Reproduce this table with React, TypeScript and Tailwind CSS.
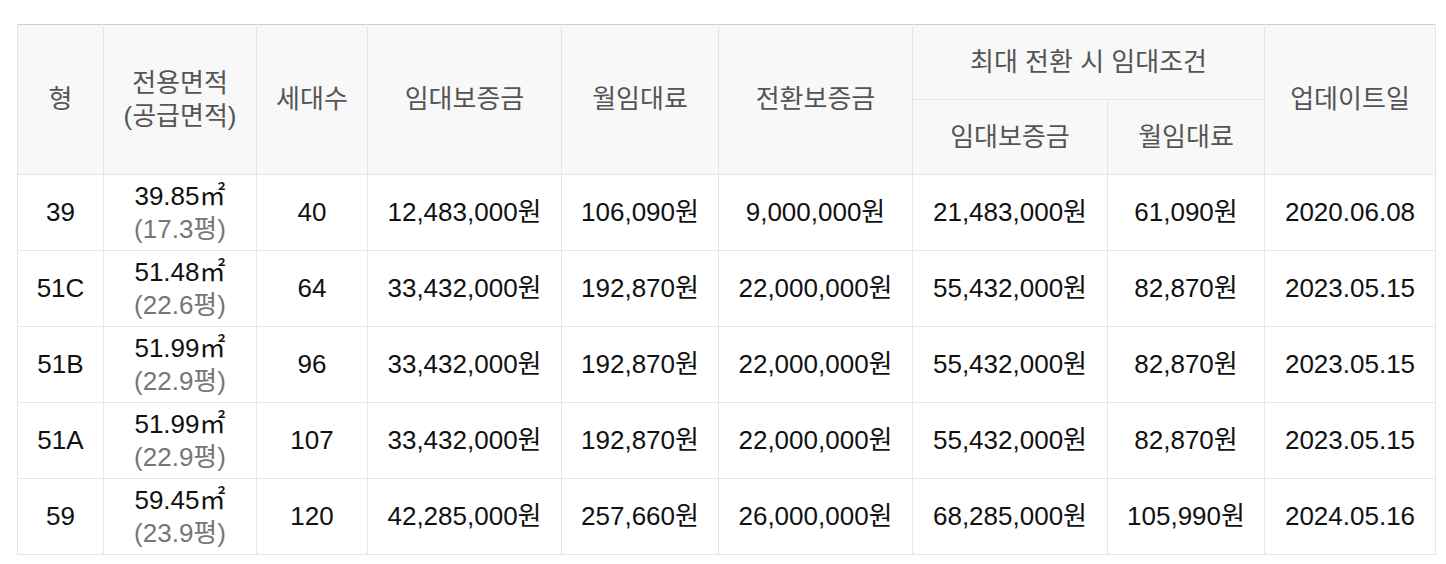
import React from "react";

const rows = [
  { t: "39", a: "39.85㎡", p: "(17.3평)", n: "40", d: "12,483,000원", m: "106,090원", c: "9,000,000원", md: "21,483,000원", mm: "61,090원", u: "2020.06.08" },
  { t: "51C", a: "51.48㎡", p: "(22.6평)", n: "64", d: "33,432,000원", m: "192,870원", c: "22,000,000원", md: "55,432,000원", mm: "82,870원", u: "2023.05.15" },
  { t: "51B", a: "51.99㎡", p: "(22.9평)", n: "96", d: "33,432,000원", m: "192,870원", c: "22,000,000원", md: "55,432,000원", mm: "82,870원", u: "2023.05.15" },
  { t: "51A", a: "51.99㎡", p: "(22.9평)", n: "107", d: "33,432,000원", m: "192,870원", c: "22,000,000원", md: "55,432,000원", mm: "82,870원", u: "2023.05.15" },
  { t: "59", a: "59.45㎡", p: "(23.9평)", n: "120", d: "42,285,000원", m: "257,660원", c: "26,000,000원", md: "68,285,000원", mm: "105,990원", u: "2024.05.16" },
];

const th = "border border-[#e6e6e6] bg-[#f8f8f8] font-normal text-[#555] text-center align-middle";
const td = "border border-[#e6e6e6] text-center align-middle text-[#111] h-[76px]";

export default function App() {
  return (
    <div
      className="bg-white w-[1446px] h-[564px] pt-[24px] pl-[17px]"
      style={{ fontFamily: '"Liberation Sans", "Noto Sans CJK KR", sans-serif' }}
    >
      <table className="border-collapse table-fixed w-[1418px] text-[26px] leading-[33px] border-t border-t-[#cfcfcf]">
        <colgroup>
          <col className="w-[86px]" />
          <col className="w-[153px]" />
          <col className="w-[111px]" />
          <col className="w-[194px]" />
          <col className="w-[157px]" />
          <col className="w-[194px]" />
          <col className="w-[195px]" />
          <col className="w-[157px]" />
          <col className="w-[171px]" />
        </colgroup>
        <thead>
          <tr className="h-[75px]">
            <th rowSpan={2} className={th + " border-t-[#cfcfcf]"}>형</th>
            <th rowSpan={2} className={th + " border-t-[#cfcfcf]"}>전용면적<br />(공급면적)</th>
            <th rowSpan={2} className={th + " border-t-[#cfcfcf]"}>세대수</th>
            <th rowSpan={2} className={th + " border-t-[#cfcfcf]"}>임대보증금</th>
            <th rowSpan={2} className={th + " border-t-[#cfcfcf]"}>월임대료</th>
            <th rowSpan={2} className={th + " border-t-[#cfcfcf]"}>전환보증금</th>
            <th colSpan={2} className={th + " border-t-[#cfcfcf]"}>최대 전환 시 임대조건</th>
            <th rowSpan={2} className={th + " border-t-[#cfcfcf]"}>업데이트일</th>
          </tr>
          <tr className="h-[75px]">
            <th className={th}>임대보증금</th>
            <th className={th}>월임대료</th>
          </tr>
        </thead>
        <tbody>
          {rows.map((r) => (
            <tr key={r.t}>
              <td className={td}>{r.t}</td>
              <td className={td}>
                <div>{r.a}</div>
                <div className="text-[#777]">{r.p}</div>
              </td>
              <td className={td}>{r.n}</td>
              <td className={td}>{r.d}</td>
              <td className={td}>{r.m}</td>
              <td className={td}>{r.c}</td>
              <td className={td}>{r.md}</td>
              <td className={td}>{r.mm}</td>
              <td className={td}>{r.u}</td>
            </tr>
          ))}
        </tbody>
      </table>
    </div>
  );
}
